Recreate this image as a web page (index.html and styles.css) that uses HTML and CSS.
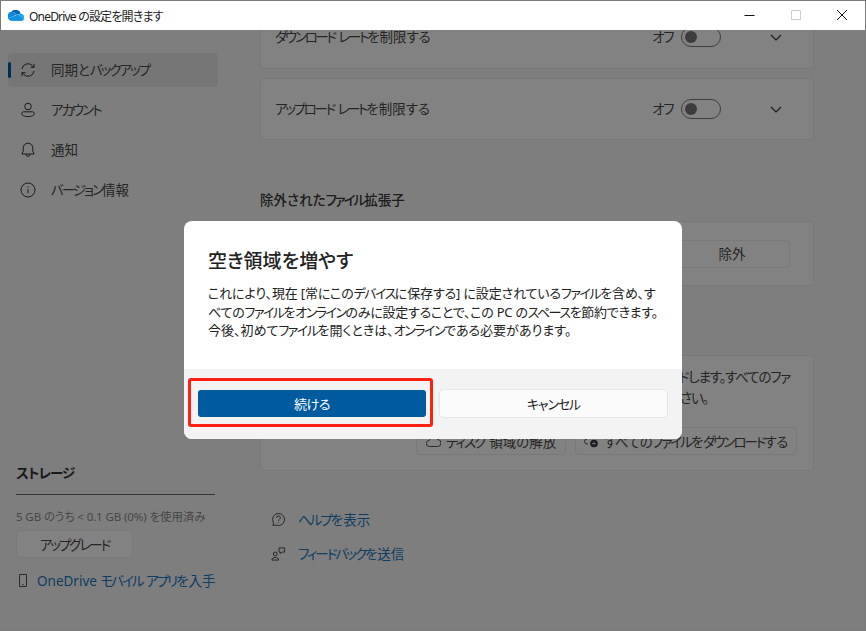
FILE: index.html
```html
<!DOCTYPE html>
<html lang="ja">
<head>
<meta charset="utf-8">
<title>OneDrive の設定を開きます</title>
<link rel="stylesheet" href="styles.css">
</head>
<body>
<div class="window">
  <header class="titlebar">
    <svg class="app-icon" width="16" height="11" viewBox="1 1 15 10"><path fill="#0364b8" d="M6.600 3.200 10 5.300l2-.9a3.600 3.600 0 0 1 1-.2A5 5 0 0 0 4 2.900z"/><path fill="#0f8ad8" d="M6.600 3.200A4 4 0 0 0 4.500 2.600 4 4 0 0 0 1 8.600L6 6.600 8.300 5.500 10 5.300z"/><path fill="#28a8ea" d="M13 4.200a3.700 3.700 0 0 0-1 .2L10 5.300 6 7.800 1 8.600A4 4 0 0 0 4.500 11H13a2.800 2.800 0 0 0 2.700-1.600A3.400 3.400 0 0 0 13 4.200z"/><path fill="#1490df" d="M1 8.600A4 4 0 0 0 4.500 11H13a3 3 0 0 0 2.700-1.600L10 5.400z"/></svg>
    <span class="title">OneDrive の設定を開きます</span>
    <div class="controls">
      <svg width="12" height="12" viewBox="0 0 12 12"><path d="M.5 6.500h10" stroke="#111" fill="none"/></svg>
      <svg width="12" height="12" viewBox="0 0 12 12"><path d="M1.500 1.500h9v9h-9z" stroke="#ccc" fill="none"/></svg>
      <svg width="12" height="12" viewBox="0 0 12 12"><path d="M1 1l10 10M11 1 1 11" stroke="#111" fill="none"/></svg>
    </div>
  </header>
  <div class="body">
    <aside class="sidebar">
      <nav class="nav">
        <a class="nav-item active"><span class="marker"></span>
          <svg class="nav-icon" viewBox="0 0 16 16"><path d="M2 7a6 6 0 0 1 10.500-3.200L14 5.300M14 1.800v3.500h-3.500M14 9a6 6 0 0 1-10.500 3.200L2 10.700M2 14.200v-3.500h3.500"/></svg><span class="nav-label">同期と<span class="k">バックアップ</span></span></a>
        <a class="nav-item">
          <svg class="nav-icon" viewBox="0 0 16 16"><circle cx="8" cy="4.500" r="3.300"/><path d="M3.500 9.800h9a1.800 1.800 0 0 1 1.800 1.800c0 2-3 3-6.300 3s-6.300-1-6.300-3a1.800 1.800 0 0 1 1.800-1.800z"/></svg><span class="nav-label"><span class="k">アカウント</span></span></a>
        <a class="nav-item">
          <svg class="nav-icon" viewBox="0 0 16 16"><path d="M8 1.200a4.800 4.800 0 0 0-4.800 4.800v3.200L1.800 12h12.400l-1.400-2.800V6A4.800 4.800 0 0 0 8 1.200zM6 12.300a2 2 0 0 0 4 0"/></svg><span class="nav-label">通知</span></a>
        <a class="nav-item">
          <svg class="nav-icon" viewBox="0 0 16 16"><circle cx="8" cy="8" r="7"/><path d="M8 7.200v4M8 4.400v1.200"/></svg><span class="nav-label"><span class="k">バージョン</span>情報</span></a>
      </nav>
      <section class="storage">
        <h2 class="storage-title">ストレージ</h2>
        <p class="storage-usage">5 GB のうち &lt; 0.1 GB (0%) を使用済み</p>
        <button class="btn upgrade"><span class="k">アップグレード</span></button>
        <a class="mobile-link">
          <svg class="phone" width="8" height="13" viewBox="0 0 8 13"><path d="M.5.500h7v12h-7zM3 10.500h1.500" fill="none" stroke="#555"/></svg><span>OneDrive <span class="k">モバイル</span> <span class="k">アプリ</span>を入手</span></a>
      </section>
    </aside>
    <main class="content">
      <div class="card row-card clipped">
        <span class="row-label"><span class="k">ダウンロード</span> <span class="k">レート</span>を制限する</span>
        <div class="row-right"><span class="k off">オフ</span><span class="toggle"><i></i></span>
          <svg class="chev" viewBox="0 0 12 7"><path d="M1 1l5 5 5-5"/></svg></div>
      </div>
      <div class="card row-card">
        <span class="row-label"><span class="k">アップロード</span> <span class="k">レート</span>を制限する</span>
        <div class="row-right"><span class="k off">オフ</span><span class="toggle"><i></i></span>
          <svg class="chev" viewBox="0 0 12 7"><path d="M1 1l5 5 5-5"/></svg></div>
      </div>
      <h3 class="section-title">除外された<span class="k">ファイル</span>拡張子</h3>
      <div class="card exclude-card"><button class="btn exclude">除外</button></div>
      <div class="card free-card">
        <p class="free-text"><span class="free-line">ダウンロードします。すべてのファ</span><span class="free-line second">してください。</span></p>
        <div class="free-actions">
          <button class="btn free-a">
            <svg width="15" height="11" viewBox="0 0 15 11"><path d="M4 10.500H3.500a3 3 0 0 1-.3-6 4.500 4.500 0 0 1 8.300-1 3.500 3.500 0 0 1 0 7z" fill="none" stroke="#555"/></svg><span class="k">ディスク</span>領域の解放</button>
          <button class="btn free-b">
            <svg width="15" height="13" viewBox="0 0 15 13"><path d="M4 9H3a2.500 2.500 0 0 1 0-5 3.500 3.500 0 0 1 6-1.500" fill="none" stroke="#555"/><circle cx="10" cy="8.500" r="3.800" fill="#333"/><path d="M10 6.500v4M8 8.500h4" stroke="#ccc"/></svg><span>すべての<span class="k">ファイル</span>を<span class="k">ダウンロード</span>する</span></button>
        </div>
      </div>
      <a class="help-link">
        <svg class="link-icon" viewBox="0 0 16 16"><path d="M8 1.500a6.500 6.500 0 1 1-3 12.300L2 14.500l.7-3A6.500 6.500 0 0 1 8 1.500zM6 6.200a2 2 0 1 1 3 1.700c-.7.4-1 .8-1 1.500M8 11v.8"/></svg><span><span class="k">ヘルプ</span>を表示</span></a>
      <a class="help-link">
        <svg class="link-icon" viewBox="0 0 16 16"><circle cx="4.500" cy="8.500" r="2"/><path d="M1 15c0-2 1-2.700 3.500-2.700S8 13 8 15zM8.500 2h6v4.500h-3L10 8V6.500H8.500z"/></svg><span><span class="k">フィードバック</span>を送信</span></a>
    </main>
  </div>
  <div class="scrim"></div>
  <div class="dialog" role="dialog">
    <div class="dialog-main">
      <h1 class="dialog-title">空き領域を増やす</h1>
      <p class="dialog-text"><span class="line-a">これにより、現在 [常にこの<span class="k">デバイス</span>に保存する] に設定されている<span class="k">ファイル</span>を含め、す</span><br><span class="line-b">べての<span class="k">ファイル</span>を<span class="k">オンライン</span>のみに設定することで、この PC の<span class="k">スペース</span>を節約できます。</span><br>今後、初めて<span class="k">ファイル</span>を開くときは、<span class="k">オンライン</span>である必要があります。</p>
    </div>
    <div class="dialog-footer">
      <button class="dbtn primary">続ける</button>
      <button class="dbtn"><span class="k">キャンセル</span></button>
    </div>
    <div class="highlight"></div>
  </div>
</div>
</body>
</html>
```

FILE: styles.css
```css
* { box-sizing: border-box; }
html, body { margin: 0; height: 100%; overflow: hidden; }
body {
  font-family: "Noto Sans", "Noto Sans CJK JP", sans-serif;
  font-size: 13.500px;
  font-feature-settings: "palt";
  color: #4a4a4a;
}
.k { letter-spacing: -2px; }
.window {
  position: relative;
  width: 866px;
  height: 631px;
  border: 1px solid #7c7c7c;
  display: flex;
  flex-direction: column;
  background: #f8f8f8;
  overflow: hidden;
}
.titlebar {
  height: 29px;
  flex: none;
  display: flex;
  align-items: center;
  background: #fff;
  padding-left: 7px;
  position: relative;
  z-index: 3;
}
.app-icon { margin-right: 5px; }
.title { font-size: 12px; letter-spacing: -.8px; color: #1b1b1b; }
.controls { margin-left: auto; display: flex; gap: 34px; padding-right: 17px; margin-top: -2px; }
.body { flex: 1; display: flex; min-height: 0; }
.sidebar {
  width: 259px;
  flex: none;
  padding: 23px 0 0 7px;
  display: flex;
  flex-direction: column;
}
.nav { display: flex; flex-direction: column; gap: 6px; width: 210px; }
.nav-item {
  position: relative;
  height: 34px;
  display: flex;
  align-items: center;
  gap: 15px;
  padding-left: 12px;
  border-radius: 4px;
}
.nav-item.active { background: #e8e8e8; }
.nav-label { padding-bottom: 3px; }
.marker {
  position: absolute;
  left: 0; top: 9px;
  width: 3px; height: 16px;
  border-radius: 2px;
  background: #005a9e;
}
.nav-icon { width: 16px; height: 16px; flex: none; fill: none; stroke: #333; stroke-width: 1; }
.storage { margin-top: auto; padding: 0 0 40px 8px; width: 207px; }
.storage-title {
  margin: 0;
  padding-bottom: 12px;
  border-bottom: 1px solid #666;
  font-size: 13.500px;
  font-weight: 700;
  letter-spacing: -.8px;
  color: #333;
}
.storage-usage { margin: 13px 0 6px; font-size: 11.500px; letter-spacing: -.1px; color: #8a8a8a; white-space: nowrap; }
.btn {
  font: inherit;
  font-feature-settings: inherit;
  color: #4a4a4a;
  height: 28px;
  background: #fff;
  border: 1px solid #ededed;
  border-radius: 4px;
  display: inline-flex;
  align-items: center;
  justify-content: center;
  gap: 5px;
  padding: 0;
}
.upgrade { width: 117px; }
.mobile-link { display: flex; align-items: center; gap: 10px; margin-top: 12px; padding-left: 3px; color: #1a78bd; white-space: nowrap; }
.phone { flex: none; }
.content { flex: 1; min-width: 0; display: flex; flex-direction: column; align-items: flex-start; padding-right: 52px; }
.card {
  width: 554px;
  background: #fff;
  border: 1px solid #ebebeb;
  border-radius: 4px;
  flex: none;
}
.row-card {
  height: 62px;
  display: flex;
  align-items: center;
  justify-content: space-between;
  padding: 0 31px 0 14px;
}
.row-label { padding-bottom: 2px; }
.row-label .k { letter-spacing: -2.300px; }
.clipped { height: 39px; margin-bottom: 9px; border-top: 0; border-radius: 0 0 4px 4px; padding-bottom: 23px; }
.clipped > * { margin-top: -1px; }
.row-right { display: flex; align-items: center; gap: 8px; }
.row-right .off { letter-spacing: -1.500px; padding-bottom: 2px; }
.toggle {
  width: 40px; height: 20px;
  border: 1px solid #7a7a7a;
  border-radius: 10px;
  display: flex;
  align-items: center;
  padding-left: 3px;
  margin-right: 41px;
}
.toggle i { width: 12px; height: 12px; border-radius: 50%; background: #777; }
.chev { width: 12px; height: 7px; fill: none; stroke: #333; stroke-width: 1.200; }
.section-title { margin: 51px 0 12px; font-size: 13.500px; font-weight: 500; line-height: 18px; color: #3a3a3a; }
.exclude-card { height: 65px; display: flex; align-items: flex-start; justify-content: flex-end; padding: 18px 23px 0 0; }
.exclude { width: 116px; padding-bottom: 2px; }
.free-card { height: 116px; margin-top: 69px; padding: 11px 23px 0 0; display: flex; flex-direction: column; align-items: flex-end; margin-bottom: 38px; }
.free-text { margin: 0; line-height: 21px; display: flex; flex-direction: column; align-items: flex-end; white-space: nowrap; letter-spacing: -1.200px; }
.free-line { display: block; }
.free-line.second { margin-right: 82px; }
.free-actions { margin-top: auto; margin-bottom: 15px; margin-right: -7px; display: flex; gap: 9px; }
.free-actions .btn { white-space: nowrap; }
.free-a { width: 150px; }
.free-b { width: 222px; letter-spacing: -.5px; }
.help-link { display: flex; align-items: center; gap: 12px; height: 20px; margin: 0 0 14px 11px; color: #1a78bd; }
.link-icon { width: 15px; height: 15px; flex: none; fill: none; stroke: #444; stroke-width: 1; }
.scrim { position: absolute; inset: 29px 0 0 0; background: rgba(0,0,0,.49); z-index: 1; }
.dialog {
  position: absolute;
  left: 183px; top: 220px;
  width: 498px; height: 218px;
  background: #fff;
  border-radius: 8px;
  z-index: 2;
  overflow: hidden;
  display: flex;
  flex-direction: column;
}
.dialog-main { flex: 1; padding: 26px 24px 0; }
.dialog-title { margin: 0 0 9px; font-size: 19px; font-weight: 500; line-height: 28px; color: #222; }
.dialog-text { margin: 0; font-size: 13px; line-height: 18.600px; white-space: nowrap; color: #222; }
.dialog-text .k { letter-spacing: -1.500px; }
.line-a { letter-spacing: -.13px; }
.line-b { letter-spacing: -.25px; }
.dialog-footer {
  height: 70px;
  flex: none;
  background: #f3f3f3;
  display: grid;
  grid-template-columns: 230px 229px;
  gap: 12px;
  padding: 20px 0 0 13px;
}
.dbtn {
  font: inherit;
  font-size: 13px;
  font-feature-settings: inherit;
  height: 29px;
  background: #fbfbfb;
  border: 1px solid #e6e6e6;
  border-radius: 4px;
  color: #1b1b1b;
  padding: 0;
}
.dbtn .k { letter-spacing: -1.200px; }
.dbtn.primary { background: #005a9e; background-clip: padding-box; border-color: transparent; color: #fff; letter-spacing: -.5px; }
.highlight {
  position: absolute;
  left: 4px; top: 157px;
  width: 245px; height: 49px;
  border: 3px solid #ff2015;
  border-radius: 3px;
}
```
